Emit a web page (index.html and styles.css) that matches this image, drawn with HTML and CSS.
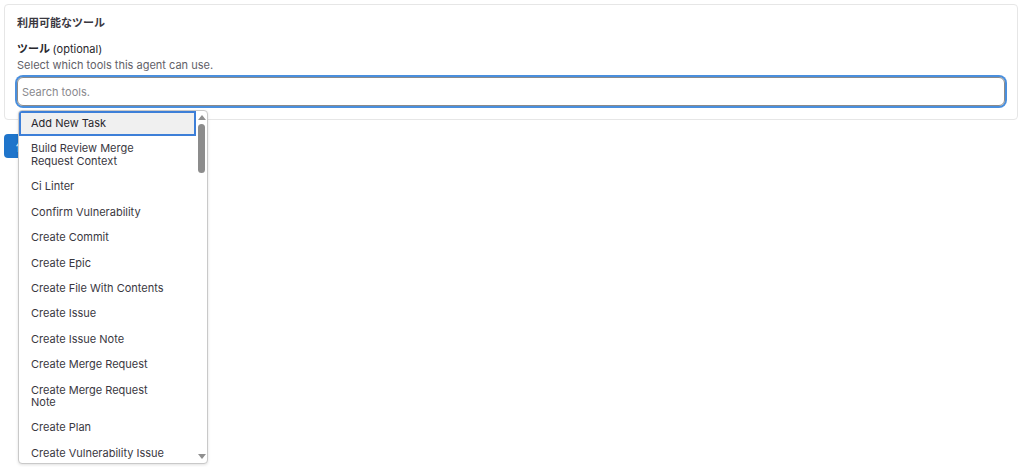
FILE: index.html
```html
<!DOCTYPE html>
<html lang="ja">
<head>
<meta charset="utf-8">
<link rel="stylesheet" href="styles.css">
</head>
<body>
<div class="card">
  <div class="title">利用可能なツール</div>
  <div class="label">ツール <span class="opt">(optional)</span></div>
  <div class="desc">Select which tools this agent can use.</div>
  <div class="input">Search tools.</div>
</div>
<div class="actions"><button class="btn">保存</button></div>

<div class="dropdown">
  <ul class="list">
    <li class="item active">Add New Task</li>
    <li class="item">Build Review Merge Request Context</li>
    <li class="item">Ci Linter</li>
    <li class="item">Confirm Vulnerability</li>
    <li class="item">Create Commit</li>
    <li class="item">Create Epic</li>
    <li class="item">Create File With Contents</li>
    <li class="item">Create Issue</li>
    <li class="item">Create Issue Note</li>
    <li class="item">Create Merge Request</li>
    <li class="item">Create Merge Request Note</li>
    <li class="item">Create Plan</li>
    <li class="item">Create Vulnerability Issue</li>
  </ul>
  <div class="scrollbar">
    <span class="arrow up"></span>
    <span class="thumb"></span>
    <span class="track"></span>
    <span class="arrow down"></span>
  </div>
</div>
</body>
</html>
```

FILE: styles.css
```css
* { box-sizing: border-box; }
html, body { margin: 0; padding: 0; background: #fff; }
body {
  font-family: Inter, "Noto Sans CJK JP", sans-serif;
  font-size: 11px;
  color: #333238;
  position: relative;
  height: 467px;
  overflow: hidden;
}
.card {
  margin: 4px 6px 0 4px;
  border: 1px solid #e6e6e6;
  border-radius: 4px;
  padding: 11px 12px 13px 12px;
}
.title {
  font-weight: 700;
  line-height: 14px;
  color: #3a383f;
  margin-bottom: 12px;
}
.label {
  font-weight: 700;
  line-height: 14px;
  color: #28272d;
}
.label .opt { font-weight: 400; }
.desc {
  line-height: 14px;
  color: #626168;
  margin-top: 2px;
}
.input {
  margin-top: 5px;
  height: 29px;
  border: 1px solid #8a8a8a;
  border-radius: 6px;
  box-shadow: 0 0 0 2px #4a8fdd;
  padding: 0 4px;
  display: flex;
  align-items: center;
  color: #89888d;
  font-size: 11px;
}
.actions { padding: 14px 0 0 4px; }
.btn {
  height: 24px;
  padding: 0 12px;
  background: #1f75cb;
  color: #fff;
  border: none;
  border-radius: 4px;
  font-family: inherit;
  font-size: 11px;
}
.dropdown {
  position: absolute;
  left: 18px;
  top: 110px;
  width: 190px;
  height: 354px;
  background: #fff;
  border: 1px solid #c9c9c9;
  border-radius: 4px;
  box-shadow: 0 1px 3px rgba(0,0,0,0.12);
  display: flex;
  overflow: hidden;
}
.list {
  list-style: none;
  margin: 0;
  padding: 0;
  width: 177px;
  flex: none;
}
.item {
  padding: 6.6px 26px 6.3px 12px;
  line-height: 12.5px;
  color: #3a383f;
}
.item.active {
  background: #f0f0f0;
  border: 2px solid #3d7fd8;
  padding: 4px 24px 4.4px 10px;
  color: #28272d;
}
.scrollbar {
  flex: 1;
  display: flex;
  flex-direction: column;
  align-items: center;
  padding: 3px 0 3px 0;
}
.arrow {
  width: 0;
  height: 0;
  border-left: 4px solid transparent;
  border-right: 4px solid transparent;
}
.arrow.up { border-bottom: 5px solid #8f8f8f; margin-top: 1px; }
.arrow.down { border-top: 5px solid #8f8f8f; margin-bottom: 1px; }
.thumb {
  width: 7px;
  height: 49px;
  background: #8c8c8c;
  border-radius: 4px;
  margin-top: 4px;
}
.track { flex: 1; }
```
